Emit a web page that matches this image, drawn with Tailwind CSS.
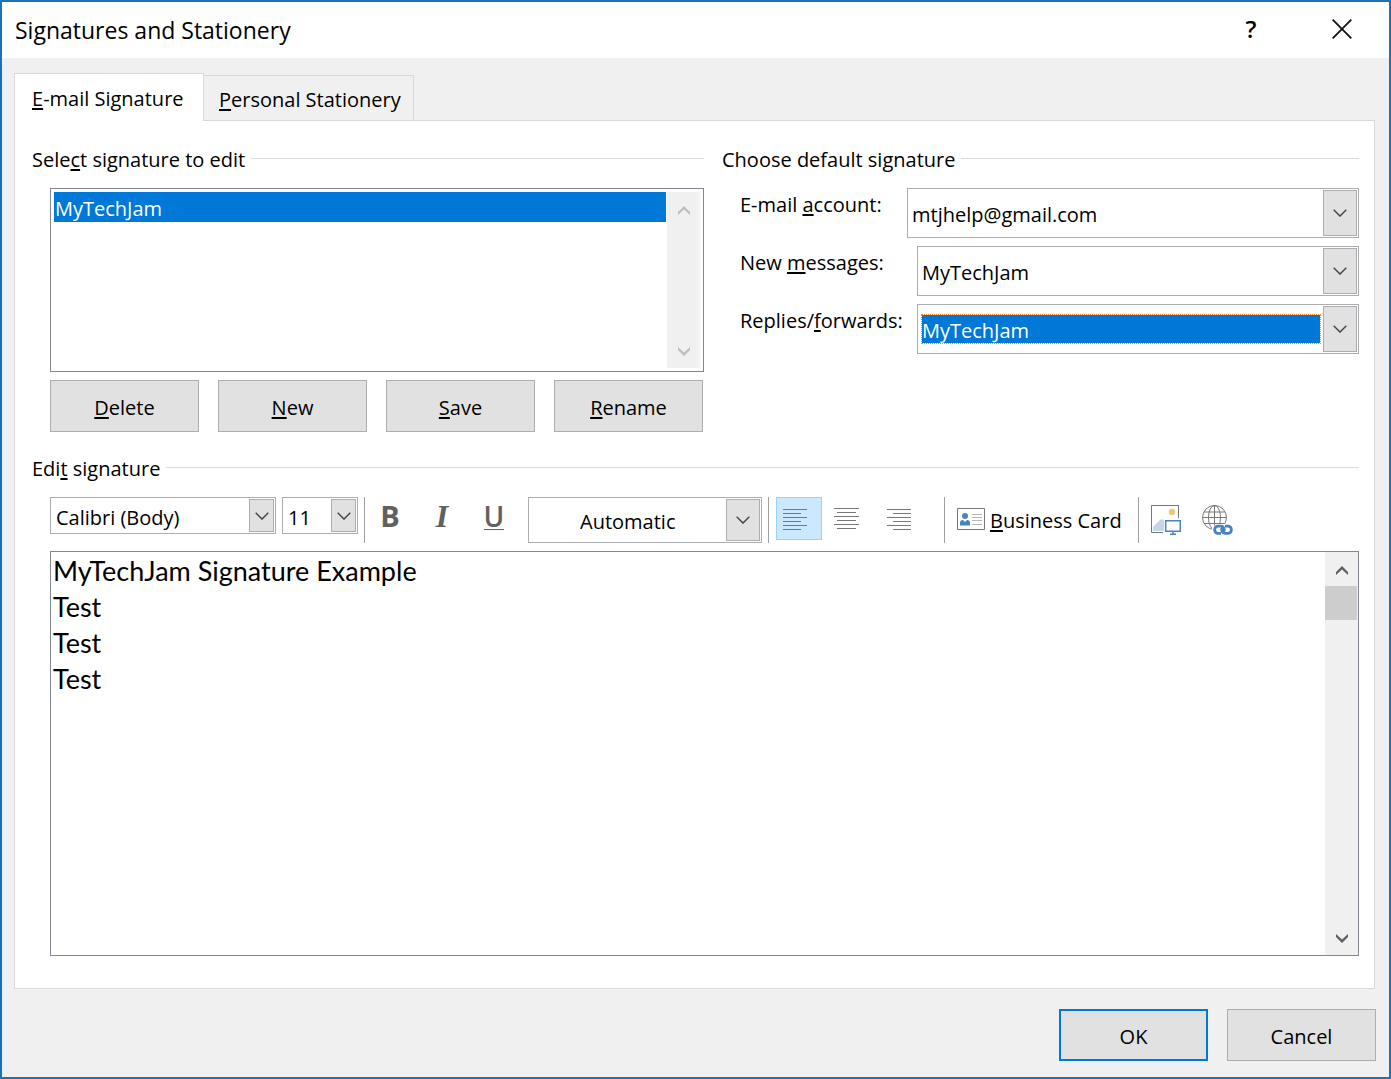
<!DOCTYPE html>
<html lang="en">
<head>
<meta charset="utf-8">
<meta name="viewport" content="width=device-width, initial-scale=1">
<title>Signatures and Stationery</title>
<script src="https://cdn.jsdelivr.net/npm/@tailwindcss/browser@4"></script>
</head>
<body class="font-['Open_Sans',sans-serif] text-black [&_u]:underline-offset-2">
<svg class="hidden" aria-hidden="true">
  <symbol id="chevron" viewBox="0 0 14 8"><path d="M.7.8 7 7.1 13.3.8" fill="none" stroke="#444" stroke-width="1.4"/></symbol>
  <symbol id="scroll-up" viewBox="0 0 12 9"><path d="M0 6 6 0l6 6v3L6 3.6 0 9z" fill="currentColor"/></symbol>
  <symbol id="scroll-down" viewBox="0 0 12 9"><path d="M0 3l6 6 6-6V0L6 5.4 0 0z" fill="currentColor"/></symbol>
</svg>
<div class="flex min-h-screen flex-col border-2 border-[#1a72b8] bg-[#f0f0f0]">
  <header class="flex h-14 items-center bg-white pr-[37px] pb-0.5 pl-[13px]">
    <h1 class="flex-1 pt-0.5 text-[23px] leading-[30px]">Signatures and Stationery</h1>
    <button type="button" aria-label="Help" class="mr-[65px] w-8 text-center text-2xl font-semibold">?</button>
    <button type="button" aria-label="Close" class="flex size-5 items-center justify-center">
      <svg class="size-5" viewBox="0 0 20 20"><path d="M.7.7 19.3 19.3M19.3.7.7 19.3" stroke="#111" stroke-width="1.8" fill="none"/></svg>
    </button>
  </header>

  <main class="flex flex-1 flex-col px-3 pt-[15px] pr-[14px]">
    <div role="tablist" class="-mb-px flex items-end text-xl">
      <button type="button" role="tab" aria-selected="true" class="z-10 h-12 w-[190px] border border-b-0 border-[#d9d9d9] bg-white pt-0.5 pl-[17px] text-left"><u>E</u>-mail Signature</button>
      <button type="button" role="tab" aria-selected="false" class="h-[46px] w-[210px] border border-l-0 border-[#d9d9d9] pt-1 pl-[15px] text-left"><u>P</u>ersonal Stationery</button>
    </div>

    <div class="flex flex-1 flex-col border border-[#d9d9d9] bg-white pt-6 pr-[15px] pb-8 pl-[17px] text-xl leading-[30px]">
      <div class="grid grid-cols-[672fr_637fr] gap-[18px]">
        <section>
          <h2 class="flex items-center gap-1.5"><label for="signatures">Sele<u>c</u>t signature to edit</label><span class="mb-[3px] h-px flex-1 bg-[#dcdcdc]"></span></h2>
          <div class="mt-[13px] ml-[18px] flex h-46 border border-[#828790] p-[3px]">
            <select id="signatures" size="4" class="min-w-0 flex-1 overflow-hidden outline-none">
              <option selected class="h-[30px] bg-[linear-gradient(#0078d7,#0078d7)] px-px pt-[3px] leading-7 [-webkit-text-fill-color:white]">MyTechJam</option>
            </select>
            <div class="ml-px flex w-[33px] flex-col items-center justify-between bg-[#f0f0f0] pt-3.5 pb-3 text-[#bfbfbf]">
              <svg class="h-[9px] w-3"><use href="#scroll-up"/></svg>
              <svg class="h-[9px] w-3"><use href="#scroll-down"/></svg>
            </div>
          </div>
          <div class="mt-2 mr-px ml-[18px] grid grid-cols-4 gap-[19px]">
            <button type="button" class="h-[52px] border border-[#adadad] bg-[#e1e1e1] pt-[3px]"><u>D</u>elete</button>
            <button type="button" class="h-[52px] border border-[#adadad] bg-[#e1e1e1] pt-[3px]"><u>N</u>ew</button>
            <button type="button" class="h-[52px] border border-[#adadad] bg-[#e1e1e1] pt-[3px]"><u>S</u>ave</button>
            <button type="button" class="h-[52px] border border-[#adadad] bg-[#e1e1e1] pt-[3px]"><u>R</u>ename</button>
          </div>
        </section>

        <section>
          <h2 class="flex items-center gap-1.5">Choose default signature<span class="mb-[3px] h-px flex-1 bg-[#dcdcdc]"></span></h2>
          <div class="mt-[13px] ml-[18px] flex flex-col gap-2">
            <div class="flex">
              <label for="account" class="w-[167px] pt-0.5">E-mail <u>a</u>ccount:</label>
              <div class="grid h-[50px] min-w-0 flex-1 border border-[#abadb3]">
                <select id="account" class="appearance-none pt-[3px] pl-1 outline-none [grid-area:1/1]"><option>mtjhelp@gmail.com</option></select>
                <span class="pointer-events-none m-px flex w-[34px] items-center justify-center justify-self-end border border-[#adadad] bg-[#e1e1e1] [grid-area:1/1]"><svg class="h-2 w-3.5"><use href="#chevron"/></svg></span>
              </div>
            </div>
            <div class="flex">
              <label for="new" class="w-[177px] pt-0.5">New <u>m</u>essages:</label>
              <div class="grid h-[50px] min-w-0 flex-1 border border-[#abadb3]">
                <select id="new" class="appearance-none pt-[3px] pl-1 outline-none [grid-area:1/1]"><option>MyTechJam</option></select>
                <span class="pointer-events-none m-px flex w-[34px] items-center justify-center justify-self-end border border-[#adadad] bg-[#e1e1e1] [grid-area:1/1]"><svg class="h-2 w-3.5"><use href="#chevron"/></svg></span>
              </div>
            </div>
            <div class="flex">
              <label for="replies" class="w-[177px] pt-0.5">Replies/<u>f</u>orwards:</label>
              <div class="grid h-[50px] min-w-0 flex-1 items-center border border-[#abadb3]">
                <select id="replies" class="mr-[37px] ml-[3px] h-[30px] appearance-none border border-dotted border-[#ff8728] bg-black bg-[linear-gradient(#0078d7,#0078d7)] pt-px text-white outline-none [background-clip:padding-box,border-box] [grid-area:1/1]"><option>MyTechJam</option></select>
                <span class="pointer-events-none m-px flex h-[46px] w-[34px] items-center justify-center justify-self-end border border-[#adadad] bg-[#e1e1e1] [grid-area:1/1]"><svg class="h-2 w-3.5"><use href="#chevron"/></svg></span>
              </div>
            </div>
          </div>
        </section>
      </div>

      <section class="mt-[22px] flex flex-1 flex-col">
        <h2 class="flex items-center gap-1.5"><label for="editor">Edi<u>t</u> signature</label><span class="mb-[3px] h-px flex-1 bg-[#dcdcdc]"></span></h2>
        <div role="toolbar" aria-label="Formatting" class="mt-[13px] ml-[18px] flex h-[46px] items-start">
          <div class="grid h-[37px] w-[226px] border border-[#abadb3]">
            <select aria-label="Font" class="appearance-none pt-1 pl-[5px] outline-none [grid-area:1/1]"><option>Calibri (Body)</option></select>
            <span class="pointer-events-none m-px flex w-[25px] items-center justify-center justify-self-end border border-[#adadad] bg-[#e1e1e1] [grid-area:1/1]"><svg class="h-2 w-3.5"><use href="#chevron"/></svg></span>
          </div>
          <div class="ml-1.5 grid h-[37px] w-[76px] border border-[#abadb3]">
            <select aria-label="Font size" class="appearance-none pt-1 pl-[5px] outline-none [grid-area:1/1]"><option>11</option></select>
            <span class="pointer-events-none m-px flex w-[25px] items-center justify-center justify-self-end border border-[#adadad] bg-[#e1e1e1] [grid-area:1/1]"><svg class="h-2 w-3.5"><use href="#chevron"/></svg></span>
          </div>
          <span class="ml-1.5 h-full w-px bg-[#a0a0a0]"></span>
          <div class="ml-0.5 flex gap-1.5 text-[#606060]">
            <button type="button" aria-label="Bold" class="h-[38px] w-[46px] text-[29px] font-bold">B</button>
            <button type="button" aria-label="Italic" class="h-[38px] w-[46px] font-['Liberation_Serif',serif] text-[32px] font-bold italic">I</button>
            <button type="button" aria-label="Underline" class="flex h-[38px] w-[46px] justify-center text-[28px] font-semibold"><span class="h-[33px] border-b border-[#606060] leading-[38px]">U</span></button>
          </div>
          <div class="ml-[11px] grid h-[46px] w-[234px] border border-[#abadb3]">
            <select aria-label="Font color" class="appearance-none pt-[3px] pl-[51px] outline-none [grid-area:1/1]"><option>Automatic</option></select>
            <span class="pointer-events-none m-px flex w-[34px] items-center justify-center justify-self-end border border-[#adadad] bg-[#e1e1e1] [grid-area:1/1]"><svg class="h-2 w-3.5"><use href="#chevron"/></svg></span>
          </div>
          <span class="ml-1.5 h-full w-px bg-[#a0a0a0]"></span>
          <div class="ml-[7px] flex gap-1.5">
            <button type="button" aria-label="Align left" aria-pressed="true" class="h-[43px] w-[46px] border border-[#99d1ff] bg-[#cce8ff] pt-0.5 pl-1.5"><svg class="h-[22px] w-6" viewBox="0 0 24 22"><path d="M0 .5h24M0 4.5h18M0 8.5h24M0 12.5h18M0 16.5h24M0 20.5h18" stroke="#777" fill="none"/></svg></button>
            <button type="button" aria-label="Center" class="h-[43px] w-[46px] pl-1.5"><svg class="h-[22px] w-[25px]" viewBox="0 0 25 22"><path d="M0 .5h25M3 4.5h19M0 8.5h25M3 12.5h19M0 16.5h25M3 20.5h19" stroke="#777" fill="none"/></svg></button>
            <button type="button" aria-label="Align right" class="h-[43px] w-[46px] pt-0.5 pl-[7px]"><svg class="h-[22px] w-6" viewBox="0 0 24 22"><path d="M0 .5h24M6 4.5h18M0 8.5h24M6 12.5h18M0 16.5h24M6 20.5h18" stroke="#777" fill="none"/></svg></button>
          </div>
          <span class="ml-[18px] h-full w-px bg-[#a0a0a0]"></span>
          <button type="button" class="ml-3 flex h-[46px] items-center gap-[5px]">
            <svg class="mb-0.5 h-[22px] w-7" viewBox="0 0 28 22"><path d="M.5.5h27v21H.5z" fill="#fff" stroke="#777"/><circle cx="8" cy="8" r="3" fill="#4a82bd"/><path d="M3 17.5V15q0-3 3-3l2 2 2-2q3 0 3 3v2.500z" fill="#4a82bd"/><path d="M15 6.500h10M15 9.500h10M15 12.500h10M15 16.500h10" stroke="#b5b5b5"/></svg>
            <span class="pt-0.5"><u>B</u>usiness Card</span>
          </button>
          <span class="ml-4 h-full w-px bg-[#a0a0a0]"></span>
          <button type="button" aria-label="Picture" class="ml-3 pt-2">
            <svg class="h-[30px] w-[31px]" viewBox="0 0 31 30"><path d="M12 27.500H.5V.500h27V13" fill="#fff" stroke="#777"/><path d="M2 26v-4l7-7q2-1.500 3.500 0L13 16v10z" fill="#c3d6ea"/><circle cx="21" cy="7" r="3.200" fill="#f0c778"/><path d="M14.700 15.700h14.600v10.600H14.700z" fill="#fff" stroke="#4a82bd" stroke-width="1.500"/><path d="M22 27v2M19 29.300h6" stroke="#4a82bd" stroke-width="1.500"/></svg>
          </button>
          <button type="button" aria-label="Hyperlink" class="ml-5 pt-2">
            <svg class="h-[30px] w-[31px]" viewBox="0 0 31 30" fill="none"><g stroke="#777"><circle cx="12.500" cy="12.500" r="12"/><ellipse cx="12.500" cy="12.500" rx="6" ry="12"/><path d="M12.500.500v24M2 7h21M.5 12.500h24M2 18.500h21"/></g><path d="M10 30V23l4-4h10l6 1 1 4v6z" fill="#fff"/><g stroke="#4a82bd" stroke-width="2.800"><path d="M19 28.300h-3.500a3.700 3.700 0 0 1 0-7.200H19a3.600 3.600 0 0 1 2.500 5.900"/><path d="M23 21.100h3.500a3.700 3.700 0 0 1 0 7.200H23a3.600 3.600 0 0 1-2.500-5.900"/></g></svg>
          </button>
        </div>

        <div class="mt-2 ml-[18px] flex flex-1 border border-[#828790]">
          <textarea id="editor" spellcheck="false" class="min-w-0 flex-1 resize-none overflow-hidden pt-px pl-0.5 font-['Lato',sans-serif] text-[27px] leading-9 outline-none">MyTechJam Signature Example
Test
Test
Test</textarea>
          <div class="flex w-[33px] flex-col items-center bg-[#f0f0f0] pb-3 text-[#606060]">
            <svg class="mt-3.5 h-[9px] w-3"><use href="#scroll-up"/></svg>
            <span class="mt-[11px] mr-px h-[34px] w-8 bg-[#cdcdcd]"></span>
            <svg class="mt-auto h-[9px] w-3"><use href="#scroll-down"/></svg>
          </div>
        </div>
      </section>
    </div>
  </main>

  <footer class="flex justify-end gap-[19px] pt-5 pr-[13px] pb-4 text-xl">
    <button type="submit" class="h-[52px] w-[149px] border-2 border-[#0078d7] bg-[#e1e1e1] pt-[3px]">OK</button>
    <button type="button" class="h-[52px] w-[149px] border border-[#adadad] bg-[#e1e1e1] pt-[3px]">Cancel</button>
  </footer>
</div>
</body>
</html>
